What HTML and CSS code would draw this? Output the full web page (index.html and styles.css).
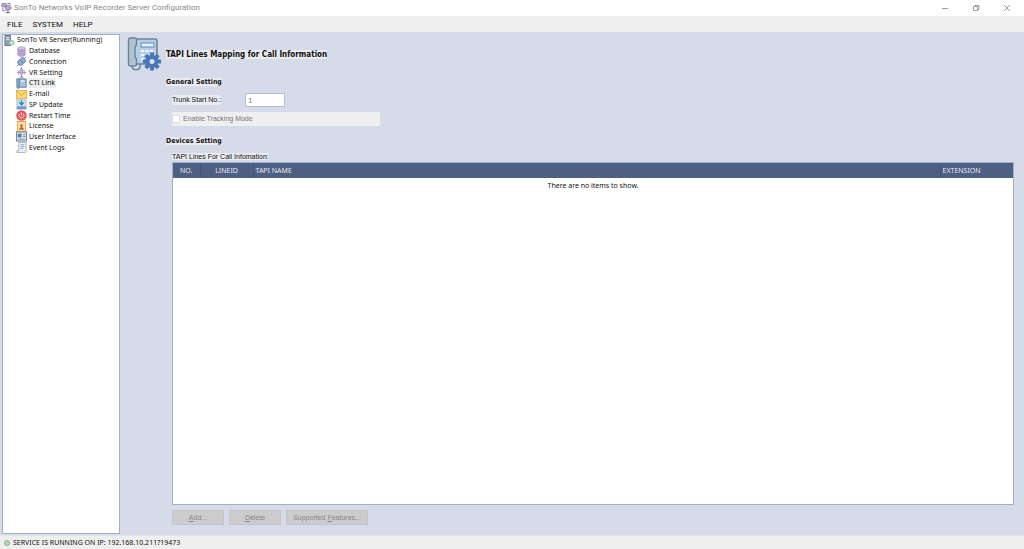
FILE: index.html
```
<!DOCTYPE html>
<html lang="en">
  <head>
    <title>SonTo Networks VoIP Recorder Server Configuration</title>
    <meta charset="utf-8" />
    <link rel="stylesheet" href="styles.css">
  </head>
  <body>
    <header class="titlebar">
      <svg class="app-icon" viewBox="0 0 12 12">
        <rect x="1" y="1" width="5" height="4" rx="1" fill="#b9a3cf" stroke="#7d6799" stroke-width=".7"/>
        <path d="M7 1h3v3M2 6v3h3" fill="none" stroke="#8b78a8"/>
        <circle cx="7.500" cy="6" r="2.600" fill="#c8b2dd" stroke="#806a9e"/>
        <path d="M7.500 8v4M5 11h5M10 6h2" stroke="#806a9e"/>
      </svg>
      <h1>SonTo Networks VoIP Recorder Server Configuration</h1>
      <div class="win-buttons">
        <button aria-label="Minimize"><svg viewBox="0 0 8 8"><path d="M1 4.500h6"/></svg></button>
        <button aria-label="Restore"><svg viewBox="0 0 8 8"><path d="M1.500 2.500h4v4h-4zM3 2.500v-1h4v4H5.500"/></svg></button>
        <button aria-label="Close"><svg viewBox="0 0 8 8"><path d="M1 1l6 6M7 1L1 7"/></svg></button>
      </div>
    </header>
    <nav class="menu">
      <button>FILE</button>
      <button>SYSTEM</button>
      <button>HELP</button>
    </nav>
    <div class="content">
      <aside class="tree">
        <ul>
          <li class="root">
            <svg viewBox="0 0 12 12"><rect x="1" y=".5" width="6" height="11" fill="#8fa3b4" stroke="#5d7488"/><path d="M2 3h4M2 5h4" stroke="#dfe8ef"/><circle cx="8.500" cy="8.500" r="3" fill="#9ccbb0"/><path d="M7.500 7l2.500 1.500L7.500 10z" fill="#fff"/></svg>
            <a href="#">SonTo VR Server(Running)</a>
          </li>
          <li>
            <svg viewBox="0 0 12 12"><path d="M2 2.500v7c0 2.500 8 2.500 8 0v-7" fill="#c3a8d8" stroke="#9a80b5" stroke-width=".6"/><ellipse cx="6" cy="2.500" rx="4" ry="1.700" fill="#dac8e8" stroke="#9a80b5" stroke-width=".6"/><path d="M2 5c1 1.500 7 1.500 8 0M2 7.500c1 1.500 7 1.500 8 0" fill="none" stroke="#9a80b5" stroke-width=".6"/></svg>
            <a href="#">Database</a>
          </li>
          <li>
            <svg viewBox="0 0 12 12"><path d="M1 11l3-3M8 4l3-3" stroke="#56708c"/><rect x="1.500" y="3" width="9" height="6" rx="2.500" transform="rotate(-45 6 6)" fill="#8eafcc" stroke="#6688a8"/><path d="M4.500 4.500l3 3" stroke="#56789a"/></svg>
            <a href="#">Connection</a>
          </li>
          <li>
            <svg viewBox="0 0 12 12"><path d="M6 0v12M1 6h10M3 3.500v5M9 3.500v5" stroke="#a690c0"/><rect x="4.500" y="2" width="3" height="6" rx="1.500" fill="#c9b6dc" stroke="#9079ae" stroke-width=".7"/><path d="M4 11h4" stroke="#9079ae"/></svg>
            <a href="#">VR Setting</a>
          </li>
          <li class="selected">
            <svg viewBox="0 0 12 12"><rect x="1" y="1" width="10" height="9" fill="#9db9d6" stroke="#56789f"/><path d="M3.500 1v9M1 11h3" stroke="#56789f"/><rect x="5" y="2.500" width="4.500" height="2" fill="#e4eef7"/><path d="M5 6.500h5M5 8.500h5" stroke="#d5e3f0" stroke-dasharray="1"/></svg>
            <a href="#">CTI Link</a>
          </li>
          <li>
            <svg viewBox="0 0 12 12"><rect x=".5" y="1.500" width="11" height="9" fill="#ffd768" stroke="#d9b45c"/><path d="M.5 2l5.500 5 5.500-5" fill="none" stroke="#d9a63c"/></svg>
            <a href="#">E-mail</a>
          </li>
          <li>
            <svg viewBox="0 0 12 12"><rect x="1" y="1" width="10" height="10" fill="#cfe2f5" stroke="#86a7c8" stroke-width=".7"/><path d="M6 1v4M3.500 4L6 7l2.500-3z" fill="#3d83c8" stroke="#3d83c8"/><path d="M1 8h10v3H1z" fill="#6d99c4"/></svg>
            <a href="#">SP Update</a>
          </li>
          <li>
            <svg viewBox="0 0 12 12"><circle cx="6" cy="6" r="5.700" fill="#e65555"/><path d="M4.200 4a2.700 2.700 0 1 0 3.600 0M6 2.500V6" fill="none" stroke="#fff" stroke-width=".9"/></svg>
            <a href="#">Restart Time</a>
          </li>
          <li>
            <svg viewBox="0 0 12 12"><rect x="1.500" y=".5" width="9" height="11" fill="#ffe2a0" stroke="#d6a64c"/><circle cx="6" cy="5" r="1.500" fill="#c2603a"/><path d="M3.500 9.500c0-4 5-4 5 0z" fill="#c2603a"/></svg>
            <a href="#">License</a>
          </li>
          <li>
            <svg viewBox="0 0 12 12"><rect x=".5" y="1" width="11" height="10" fill="#d4e0ec" stroke="#6a8099"/><rect x="2" y="3" width="4" height="4" fill="#5b7fa5"/><path d="M7.500 4h3M7.500 6h3M2 9h8" stroke="#8296aa"/></svg>
            <a href="#">User Interface</a>
          </li>
          <li>
            <svg viewBox="0 0 12 12"><path d="M3 .5h8v9c0 2-1 2-2 2H1v-2h2z" fill="#e8eff5" stroke="#8ba0b4" stroke-width=".8"/><path d="M5 3h4M5 5h4M5 7h3" stroke="#7590ab" stroke-width=".8"/></svg>
            <a href="#">Event Logs</a>
          </li>
        </ul>
      </aside>
      <main class="panel">
        <svg class="phone-icon" viewBox="0 0 34 34">
          <path d="M5 28v1c0 5 8 5 8 0v-2" fill="none" stroke="#71879b" stroke-width="1.600"/>
          <rect x="7" y="2" width="23" height="25" rx="2" fill="#b5d0e8" stroke="#6e8396" stroke-width="1.600"/>
          <path d="M1.500 3q0-2 2-2h4q2 0 2 2v5L8 10v10l1.500 2v5q0 2-2 2h-4q-2 0-2-2z" fill="#b3c3d1" stroke="#6e8396" stroke-width="1.400"/>
          <rect x="14" y="6" width="13" height="4" fill="#e7f3fc" stroke="#5c87b4"/>
          <path d="M14 14h3M18.500 14h3M23 14h3M14 18h3M18.500 18h3M14 22h3" stroke="#f2f8fd" stroke-width="2.200"/>
          <path d="M25 15.500v18M16 24.500h18M18.700 18.200l12.600 12.600M31.300 18.200l-12.600 12.600" stroke="#4976b5" stroke-width="4"/>
          <circle cx="25" cy="24.500" r="6.500" fill="#4976b5"/>
          <circle cx="25" cy="24.500" r="2.500" fill="#d5e2f2"/>
        </svg>
        <form class="settings">
          <h2><span>TAPI Lines Mapping for Call Information</span></h2>
          <h3><span>General Setting</span></h3>
          <div class="row">
            <label for="trunk">Trunk Start No.:</label>
            <input type="text" id="trunk" value="1" disabled>
          </div>
          <div class="check">
            <input type="checkbox" id="tracking" disabled>
            <label for="tracking">Enable Tracking Mode</label>
          </div>
          <h3><span>Devices Setting</span></h3>
          <div class="lines">
            <p class="caption" id="caption"><span>TAPI Lines For Call Infomation:</span></p>
            <div class="grid">
              <table aria-labelledby="caption">
                <thead>
                  <tr><th class="no">NO.</th><th class="lineid">LINEID</th><th>TAPI NAME</th><th class="ext">EXTENSION</th></tr>
                </thead>
                <tbody>
                  <tr><td colspan="4">There are no items to show.</td></tr>
                </tbody>
              </table>
            </div>
            <div class="buttons">
              <button type="button" disabled><u>A</u>dd...</button>
              <button type="button" disabled><u>D</u>elete</button>
              <button type="button" class="wide" disabled>Supported <u>F</u>eatures...</button>
            </div>
          </div>
        </form>
      </main>
    </div>
    <footer class="status">
      <span class="dot"></span>
      <span>SERVICE IS RUNNING ON IP: 192.168.10.211?19473</span>
    </footer>
  </body>
</html>
```
FILE: styles.css
```
*{
	box-sizing:border-box;
	margin:0;
	padding:0;
}
body{
	display:flex;
	flex-direction:column;
	height:100vh;
	background:#efefef;
	color:#111;
	font-family:"Noto Sans","Open Sans",sans-serif;
	font-size:7px;
	line-height:10px;
}
button{
	border:0;
	background:none;
	font:inherit;
	color:inherit;
}
.titlebar{
	display:flex;
	align-items:center;
	height:16px;
	padding-left:1px;
	background:#fff;
}
.app-icon{
	width:11px;
	height:12px;
	margin-right:2px;
}
.titlebar h1{
	flex:1;
	color:#888;
	font:8px/12px Roboto,sans-serif;
}
.win-buttons{
	display:flex;
	margin-right:2px;
}
.win-buttons button{
	width:31px;
	height:16px;
}
.win-buttons svg{
	display:block;
	width:8px;
	height:8px;
	margin:0 auto;
	fill:none;
	stroke:#888;
	stroke-width:.8;
}
.menu{
	display:flex;
	gap:10px;
	height:16px;
	padding:1px 0 0 7px;
	font:8px/15px Roboto,sans-serif;
}
.content{
	display:flex;
	flex:1;
	min-height:0;
	padding:2px 2px 1px;
	background:#d5dbe8;
	border-bottom:1px solid #dfe5ec;
}
.tree{
	width:118px;
	background:#fff;
	border:1px solid #9fb2c6;
}
.tree ul{
	display:flex;
	flex-direction:column;
	height:118px;
	list-style:none;
}
.tree li{
	display:flex;
	flex:1;
	align-items:center;
	min-height:0;
	padding-left:13px;
}
.tree .root{
	padding-left:1px;
}
.tree svg{
	width:11px;
	height:11px;
	margin-right:1px;
}
.tree a{
	padding:0 1px;
	color:#111;
	text-decoration:none;
}
.tree .selected a{
	background:#eee;
}
.panel{
	display:flex;
	flex:1;
	padding:3px 8px 9px 7px;
}
.phone-icon{
	flex:none;
	width:34px;
	height:34px;
}
.settings{
	display:flex;
	flex:1;
	flex-direction:column;
	padding:12px 0 0 5px;
}
h2 span, h3 span, .caption span, .row label{
	background:#e9ebee;
}
h2, h3{
	font-family:"DejaVu Sans Condensed","DejaVu Sans",sans-serif;
	font-stretch:condensed;
}
h2{
	margin-bottom:17px;
	font-size:8px;
	line-height:11px;
}
h3{
	font-size:7px;
	line-height:10px;
}
.row, .check, .lines{
	margin-left:6px;
	font-family:"Liberation Sans",sans-serif;
}
.row{
	display:flex;
	align-items:center;
	margin-top:6px;
}
.row label{
	margin-right:24px;
}
.row input{
	width:40px;
	height:14px;
	padding:0 2px;
	border:1px solid #b4bfcd;
	background:#fff;
	color:#777;
	font:inherit;
}
.check{
	display:flex;
	align-items:center;
	gap:3px;
	width:208px;
	height:14px;
	margin-top:5px;
	margin-bottom:10px;
	background:#efefef;
	color:#777;
}
.check input{
	appearance:none;
	width:8px;
	height:8px;
	background:#fff;
	border:1px solid #ddd;
}
.lines{
	display:flex;
	flex:1;
	flex-direction:column;
	margin-top:6px;
}
.grid{
	flex:1;
	background:#fff;
	border:1px solid #a3b1c4;
}
table{
	width:100%;
	border-collapse:collapse;
	table-layout:fixed;
	font-family:"Noto Sans","Open Sans",sans-serif;
}
th{
	height:15px;
	padding-left:2px;
	background:#4d5f83;
	border-left:1px solid #43547a;
	color:#e4e8ef;
	font-weight:normal;
	text-align:left;
}
th:first-child{
	border-left:0;
}
.no{
	width:27px;
	padding:0;
	text-align:center;
}
.lineid{
	width:53px;
	padding:0;
	text-align:center;
}
.ext{
	width:73px;
}
td{
	height:15px;
	text-align:center;
}
.buttons{
	display:flex;
	gap:5px;
	margin-top:5px;
}
.buttons button{
	width:52px;
	height:15px;
	background:#ccc;
	border:1px solid #c2c5ca;
	color:#888;
}
.buttons .wide{
	width:82px;
}
.status{
	display:flex;
	align-items:center;
	gap:3px;
	height:13px;
	padding-left:4px;
}
.dot{
	width:6px;
	height:6px;
	border:1px solid #7fb28c;
	border-radius:50%;
	background:#b4dcb9;
}
```
